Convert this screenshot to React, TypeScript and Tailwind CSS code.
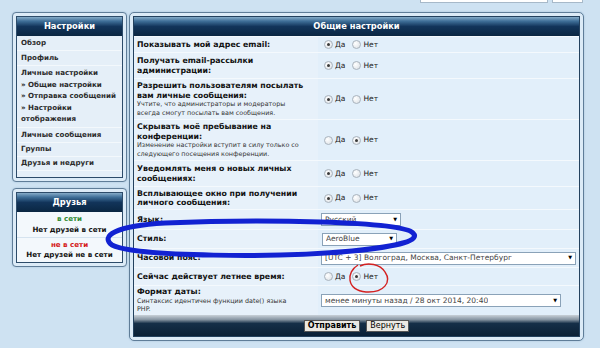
import React from "react";

const font = "font-['DejaVu_Sans',Verdana,sans-serif]";

function Radio({ checked }: { checked?: boolean }) {
  return (
    <span className="w-[9px] h-[9px] rounded-full border border-[#a9b3bd] bg-[radial-gradient(circle_at_35%_35%,#ffffff,#d9dee3)] flex items-center justify-center shrink-0">
      {checked && <span className="w-[3px] h-[3px] rounded-full bg-[#3a3a3a]" />}
    </span>
  );
}

function YesNo({ yes }: { yes: boolean }) {
  return (
    <div className="flex items-center ml-[3px] text-[7.5px] text-[#222]">
      <Radio checked={yes} />
      <span className="ml-[2px] mr-[7px]">Да</span>
      <Radio checked={!yes} />
      <span className="ml-[2px]">Нет</span>
    </div>
  );
}

function Select({ value, width }: { value: string; width: string }) {
  return (
    <div
      className={`${width} h-[13px] bg-white border border-[#8aa2b8] flex items-center justify-between pl-[3px] pr-[3px] text-[7.5px] text-[#444]`}
    >
      <span className="truncate">{value}</span>
      <span className="text-[5px] text-black">▼</span>
    </div>
  );
}

function Row({
  h,
  label,
  note,
  children,
}: {
  h: string;
  label: string[];
  note?: string[];
  children: React.ReactNode;
}) {
  return (
    <div className={`flex ${h} border-t border-[#f4f9fd]`}>
      <div className="w-[184px] shrink-0 bg-[#e7f1fa] pl-[3px] flex flex-col justify-center">
        {label.map((l) => (
          <div key={l} className="text-[7.8px] leading-[9.5px] font-bold text-[#111] whitespace-nowrap">
            {l}
          </div>
        ))}
        {note?.map((n) => (
          <div key={n} className="text-[6.4px] leading-[8.5px] text-[#333] whitespace-nowrap">
            {n}
          </div>
        ))}
      </div>
      <div className="flex-1 bg-[#e2effa] flex items-center pl-[3px]">{children}</div>
    </div>
  );
}

function Header({ title }: { title: string }) {
  return (
    <div className="bg-[linear-gradient(to_bottom,#86acc9_0%,#3f6f98_22%,#12345a_50%,#0a2642_100%)] text-white font-bold text-[8.3px] flex items-center justify-center h-[19px]">
      {title}
    </div>
  );
}

function SideItem({ h, children }: { h: string; children: React.ReactNode }) {
  return (
    <div className={`${h} flex items-center pl-[4px] border-b border-[#f3f8fc] text-[7.1px] font-bold text-[#2b2b2b]`}>
      {children}
    </div>
  );
}

export default function App() {
  return (
    <div className={`${font} w-[600px] h-[348px] bg-[#cee2f2] relative overflow-hidden`}>
      {/* bits of the form above, cut off */}
      <div className="h-[12px] flex pl-[420px] gap-[4px]">
        <div className="w-[128px] h-[3px] bg-white border-x border-b border-[#a7b9c9]" />
        <div className="w-[31px] h-[3px] bg-white border-x border-b border-[#a7b9c9]" />
      </div>

      <div className="flex pl-[12px] gap-[2px]">
        {/* left column */}
        <div className="w-[115px] flex flex-col gap-[6px]">
          <div className="border border-[#5f7d98] rounded-[4px] p-[3px] bg-[#dcebf7] shadow-[0_0_2px_#9fbdd6]">
            <div className="border border-[#2d4c6a] bg-[#e5eff8]">
              <Header title="Настройки" />
              <SideItem h="h-[15px]">Обзор</SideItem>
              <SideItem h="h-[15px]">Профиль</SideItem>
              <div className="h-[62px] pt-[1px] pl-[4px] border-b border-[#f3f8fc] text-[7.1px] leading-[11.5px] font-bold text-[#2b2b2b]">
                <div>Личные настройки</div>
                <div>» Общие настройки</div>
                <div>» Отправка сообщений</div>
                <div>» Настройки</div>
                <div>отображения</div>
              </div>
              <SideItem h="h-[15px]">Личные сообщения</SideItem>
              <SideItem h="h-[14px]">Группы</SideItem>
              <SideItem h="h-[14px]">Друзья и недруги</SideItem>
              <div className="h-[6px]" />
            </div>
          </div>

          <div className="border border-[#5f7d98] rounded-[4px] p-[3px] bg-[#dcebf7] shadow-[0_0_2px_#9fbdd6]">
            <div className="border border-[#2d4c6a] bg-[#f3f8fc]">
              <Header title="Друзья" />
              <div className="h-[26px] flex flex-col items-center justify-center text-[7.1px] leading-[10.5px] font-bold border-b border-[#d5e3ef]">
                <div className="text-[#2f8a2f]">в сети</div>
                <div className="text-[#111]">Нет друзей в сети</div>
              </div>
              <div className="h-[24px] flex flex-col items-center justify-center text-[7.1px] leading-[10.5px] font-bold">
                <div className="text-[#d41616]">не в сети</div>
                <div className="text-[#111]">Нет друзей не в сети</div>
              </div>
            </div>
          </div>
        </div>

        {/* main panel */}
        <div className="w-[455px] border border-[#5f7d98] rounded-[5px] p-[3px] bg-[#dcebf7] shadow-[0_0_2px_#9fbdd6]">
          <div className="border border-[#23415e] bg-[#e2effa]">
            <Header title="Общие настройки" />
            <Row h="h-[16px]" label={["Показывать мой адрес email:"]}>
              <YesNo yes />
            </Row>
            <Row h="h-[26px]" label={["Получать email-рассылки", "администрации:"]}>
              <YesNo yes />
            </Row>
            <Row
              h="h-[41px]"
              label={["Разрешить пользователям посылать", "вам личные сообщения:"]}
              note={["Учтите, что администраторы и модераторы", "всегда смогут посылать вам сообщения."]}
            >
              <YesNo yes />
            </Row>
            <Row
              h="h-[41px]"
              label={["Скрывать моё пребывание на", "конференции:"]}
              note={["Изменение настройки вступит в силу только со", "следующего посещения конференции."]}
            >
              <YesNo yes={false} />
            </Row>
            <Row h="h-[26px]" label={["Уведомлять меня о новых личных", "сообщениях:"]}>
              <YesNo yes />
            </Row>
            <Row h="h-[23px]" label={["Всплывающее окно при получении", "личного сообщения:"]}>
              <YesNo yes />
            </Row>
            <Row h="h-[20px]" label={["Язык:"]}>
              <Select value="Русский" width="w-[80px]" />
            </Row>
            <Row h="h-[19px]" label={["Стиль:"]}>
              <div className="ml-[1px]">
                <Select value="AeroBlue" width="w-[75px]" />
              </div>
            </Row>
            <Row h="h-[19px]" label={["Часовой пояс:"]}>
              <Select value="[UTC + 3] Волгоград, Москва, Санкт-Петербург" width="w-[255px]" />
            </Row>
            <Row h="h-[18px]" label={["Сейчас действует летнее время:"]}>
              <YesNo yes={false} />
            </Row>
            <Row
              h="h-[30px]"
              label={["Формат даты:"]}
              note={["Синтаксис идентичен функции date() языка", "PHP."]}
            >
              <Select value="менее минуты назад / 28 окт 2014, 20:40" width="w-[240px]" />
            </Row>
            <div className="h-[21px] bg-[linear-gradient(to_bottom,#c9d1d8_0%,#8795a2_22%,#152f48_40%,#0a2036_100%)] flex items-center justify-center gap-[6px]">
              <div className="h-[12px] px-[3px] bg-[#ebe9e3] border border-[#555] text-[8px] font-bold text-black flex items-center">
                Отправить
              </div>
              <div className="h-[12px] px-[3px] bg-[#ebe9e3] border border-[#555] text-[8px] text-black flex items-center">
                Вернуть
              </div>
            </div>
          </div>
        </div>
      </div>

      {/* hand-drawn annotations over the screenshot */}
      <svg className="absolute inset-0 pointer-events-none" width="600" height="348" viewBox="0 0 600 348">
        <path
          d="M 413 233 C 402 221, 260 219, 165 223 C 115 226, 100 236, 112 245 C 135 257, 280 258, 352 251 C 402 246, 420 240, 413 233 Z"
          fill="none"
          stroke="#1222d2"
          strokeWidth="5"
        />
        <path
          d="M 358 265 C 346 272, 346 290, 366 292 C 384 293, 392 282, 385 272 C 380 264, 368 262, 360 266"
          fill="none"
          stroke="#d42222"
          strokeWidth="1.4"
        />
      </svg>
    </div>
  );
}
